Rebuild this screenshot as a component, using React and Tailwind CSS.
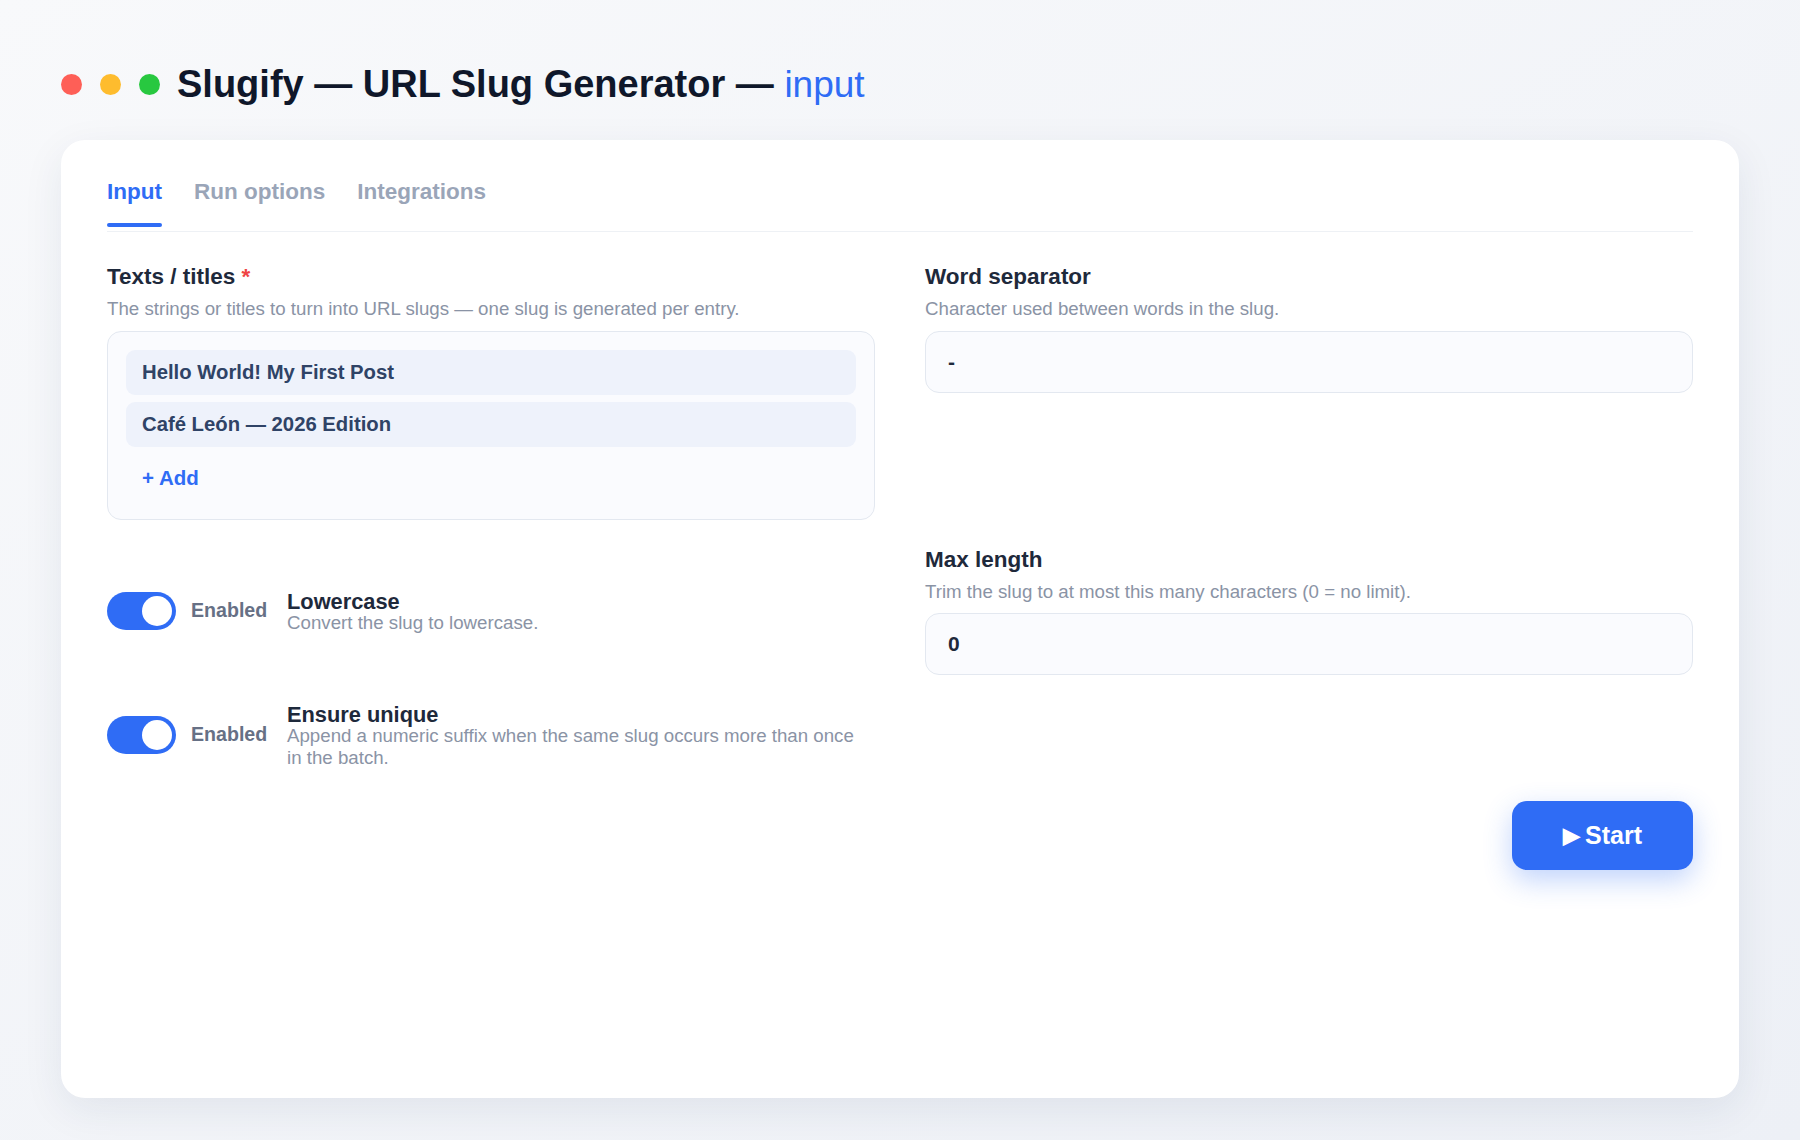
import { useState } from 'react';

const Toggle = ({ on, onClick }) => (
  <button
    onClick={onClick}
    className={`relative h-[38px] w-[69px] shrink-0 rounded-full ${on ? 'bg-[#2f6cf5]' : 'bg-[#cbd5e1]'}`}
  >
    <span className={`absolute top-[4px] h-[30px] w-[30px] rounded-full bg-white ${on ? 'left-[35px]' : 'left-[4px]'}`} />
  </button>
);

const ToggleRow = ({ title, desc }) => {
  const [on, setOn] = useState(true);
  return (
    <div className="flex items-center self-center">
      <Toggle on={on} onClick={() => setOn(!on)} />
      <span className="ml-[15px] w-[80px] shrink-0 text-[19.6px] font-bold text-[#667085]">{on ? 'Enabled' : 'Disabled'}</span>
      <div className="ml-[16px] flex max-w-[575px] flex-col pt-[3px]">
        <span className="text-[21.8px] leading-[21px] font-bold text-[#1e293b]">{title}</span>
        <span className="text-[18.7px] leading-[22px] text-[#8a93a5]">{desc}</span>
      </div>
    </div>
  );
};

const FieldHead = ({ label, desc, required }) => (
  <>
    <div className="text-[22.5px] leading-[28px] font-bold text-[#1e293b]">
      {label}
      {required && <span className="ml-[6px] text-[#ef4444]">*</span>}
    </div>
    <div className="mt-[7px] text-[18.7px] leading-[22px] text-[#8a93a5]">{desc}</div>
  </>
);

export default function App() {
  const [tab, setTab] = useState('Input');
  const tabs = ['Input', 'Run options', 'Integrations'];
  const items = ['Hello World! My First Post', 'Café León — 2026 Edition'];

  return (
    <div className="flex h-screen flex-col bg-gradient-to-br from-[#f8f9fb] to-[#edf0f6] px-[61px] pb-[42px] pt-[56px] font-['Liberation_Sans',Arial,sans-serif]">
      {/* window header */}
      <div className="flex h-[56px] items-center">
        <span className="h-[21px] w-[21px] rounded-full bg-[#fe5f57]" />
        <span className="ml-[18px] h-[21px] w-[21px] rounded-full bg-[#febc2e]" />
        <span className="ml-[18px] h-[21px] w-[21px] rounded-full bg-[#28c840]" />
        <h1 className="ml-[17px] text-[38px] font-bold text-[#0f172a]">
          Slugify — URL Slug Generator — <span className="text-[37px] font-normal text-[#2f6cf5]">input</span>
        </h1>
      </div>

      <div className="mt-[28px] flex-1 rounded-[24px] bg-white px-[46px] pt-[39px] shadow-[0_12px_40px_rgba(30,45,90,0.08)]">
        <div className="flex gap-[32px] border-b border-[#eef1f5] pb-[4px]">
          {tabs.map((t) => (
            <button key={t} onClick={() => setTab(t)} className="flex flex-col items-stretch">
              <span className={`text-[22.5px] leading-[26px] font-bold ${tab === t ? 'text-[#2f6cf5]' : 'text-[#9aa5b8]'}`}>{t}</span>
              <span className={`mt-[18px] h-[4px] rounded-full ${tab === t ? 'bg-[#2f6cf5]' : 'bg-transparent'}`} />
            </button>
          ))}
        </div>

        <div className="mt-[31px] grid grid-cols-2 gap-x-[50px] gap-y-[26px]">
          <div className="flex flex-col">
            <FieldHead label="Texts / titles" desc="The strings or titles to turn into URL slugs — one slug is generated per entry." required />
            <div className="mt-[11px] rounded-[14px] border border-[#e3e8f0] bg-[#fafbfe] px-[18px] pb-[21px] pt-[18px]">
              <div className="flex flex-col gap-[7px]">
                {items.map((it) => (
                  <div key={it} className="flex h-[45px] items-center rounded-[9px] bg-[#eef2fb] px-[16px] text-[20.3px] font-bold text-[#2f4366]">
                    {it}
                  </div>
                ))}
              </div>
              <button className="mt-[11px] px-[16px] py-[8px] text-[20.5px] leading-[24px] font-bold text-[#2f6cf5]">+ Add</button>
            </div>
          </div>

          <div className="flex flex-col">
            <FieldHead label="Word separator" desc="Character used between words in the slug." />
            <div className="mt-[11px] flex h-[62px] items-center rounded-[14px] border border-[#e3e8f0] bg-[#fafbfe] px-[22px] text-[21px] font-bold text-[#1e293b]">-</div>
          </div>

          <ToggleRow title="Lowercase" desc="Convert the slug to lowercase." />

          <div className="flex flex-col">
            <FieldHead label="Max length" desc="Trim the slug to at most this many characters (0 = no limit)." />
            <div className="mt-[10px] flex h-[62px] items-center rounded-[14px] border border-[#e3e8f0] bg-[#fafbfe] px-[22px] text-[21px] font-bold text-[#1e293b]">0</div>
          </div>

          <ToggleRow title="Ensure unique" desc="Append a numeric suffix when the same slug occurs more than once in the batch." />
          <div />
        </div>

        <div className="mt-[32px] flex justify-end">
          <button className="flex h-[69px] w-[181px] items-center justify-center rounded-[15px] bg-[#2f6cf5] text-[25px] font-bold text-white shadow-[0_10px_28px_rgba(47,108,245,0.3)]">
            <span className="mr-[5px] text-[22px]">▶</span>Start
          </button>
        </div>
      </div>
    </div>
  );
}
